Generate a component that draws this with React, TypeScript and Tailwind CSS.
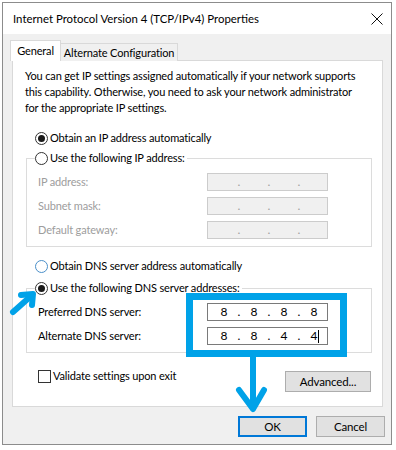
import React from 'react';

const Radio = ({ checked, blue }: { checked?: boolean; blue?: boolean }) => (
    <span className={`flex items-center justify-center w-[13px] h-[13px] rounded-full border bg-white shrink-0 ${blue ? 'border-[#4a8fc9]' : 'border-[#333333]'}`}>
        {checked && <span className="w-[7px] h-[7px] rounded-full bg-[#1a1a1a]" />}
    </span>
);

const IpBox = ({ parts, disabled, cursor }: { parts: string[]; disabled?: boolean; cursor?: boolean }) => (
    <div className={`flex items-center w-[121px] h-[18px] pl-[4px] border text-[12px] tracking-normal ${disabled ? 'bg-[#f0f0f0] border-[#cccccc] text-[#a0a0a0]' : 'bg-white border-[#7a7a7a] text-black'}`}>
        {parts.map((p, i) => (
            <React.Fragment key={i}>
                {i > 0 && <span className="w-[6px] text-center">.</span>}
                <span className="w-[24px] text-center relative">
                    {p}
                    {cursor && i === 3 && <span className="absolute top-[2px] right-[7px] w-px h-[13px] bg-black" />}
                </span>
            </React.Fragment>
        ))}
    </div>
);

const Row = ({ label, children, disabled, first }: { label: string; children: React.ReactNode; disabled?: boolean; first?: boolean }) => (
    <div className={`flex items-center h-[18px] pl-[11px] ${first ? 'mt-[7px]' : 'mt-[6px]'}`}>
        <span className={`w-[169px] ${disabled ? 'text-[#9d9d9d]' : 'text-black'}`}>{label}</span>
        {children}
    </div>
);

const Button = ({ children, focus, w }: { children: React.ReactNode; focus?: boolean; w: string }) => (
    <button className={`h-[21px] ${w} bg-[#e1e1e1] border ${focus ? 'border-[#0078d7] outline outline-1 outline-[#0078d7] -outline-offset-2' : 'border-[#adadad]'} text-black text-[11.5px] leading-[16px]`}>
        {children}
    </button>
);

export default function App() {
    return (
        <div className="relative w-[396px] h-[450px] bg-white pt-[2px] pl-[2px] text-[11px] tracking-[-0.15px] leading-[16px] text-black whitespace-nowrap" style={{ fontFamily: 'Lato, "Liberation Sans", sans-serif' }}>
            <div className="w-[390px] h-[443px] border border-[#8c8c8c] bg-[#f0f0f0] flex flex-col">
                {/* title bar */}
                <div className="h-[31px] bg-white flex items-center justify-between pl-[10px] pr-[6px] shrink-0">
                    <span className="text-[11.4px] tracking-normal">Internet Protocol Version 4 (TCP/IPv4) Properties</span>
                    <svg width="12" height="12" viewBox="0 0 12 12" className="mr-[2px]">
                        <path d="M0.5 0.5L11.5 11.5M11.5 0.5L0.5 11.5" stroke="#111" strokeWidth="1" fill="none" />
                    </svg>
                </div>

                {/* tabs */}
                <div className="flex items-end mt-[6px] pl-[7px] relative z-10 -mb-px">
                    <div className="h-[21px] w-[51px] bg-white border border-b-0 border-[#d9d9d9] flex items-center justify-center">General</div>
                    <div className="h-[18px] w-[117px] bg-[#f0f0f0] border border-l-0 border-b-0 border-[#d9d9d9] flex items-center justify-center">Alternate Configuration</div>
                </div>

                {/* panel */}
                <div className="ml-[9px] w-[371px] h-[347px] border border-[#d9d9d9] bg-white flex flex-col">
                    <p className="pt-[7px] pl-[12px]">
                        You can get IP settings assigned automatically if your network supports<br />
                        this capability. Otherwise, you need to ask your network administrator<br />
                        for the appropriate IP settings.
                    </p>

                    <label className="flex items-center gap-[2px] h-[16px] mt-[14px] ml-[22px]">
                        <Radio checked />
                        <span>Obtain an IP address automatically</span>
                    </label>

                    <fieldset className="mt-[4px] ml-[13px] w-[346px] border border-[#dcdcdc] pb-[7px]">
                        <legend className="flex items-center gap-[2px] ml-[8px] pr-[2px] h-[16px]">
                            <Radio />
                            <span>Use the following IP address:</span>
                        </legend>
                        <Row label="IP address:" disabled first><IpBox parts={['', '', '', '']} disabled /></Row>
                        <Row label="Subnet mask:" disabled><IpBox parts={['', '', '', '']} disabled /></Row>
                        <Row label="Default gateway:" disabled><IpBox parts={['', '', '', '']} disabled /></Row>
                    </fieldset>

                    <label className="flex items-center gap-[2px] h-[16px] mt-[11px] ml-[22px]">
                        <Radio blue />
                        <span>Obtain DNS server address automatically</span>
                    </label>

                    <fieldset className="mt-[6px] ml-[13px] w-[346px] border border-[#dcdcdc] pb-[7px]">
                        <legend className="flex items-center gap-[2px] ml-[8px] pr-[2px] h-[16px]">
                            <Radio checked />
                            <span>Use the following DNS server addresses:</span>
                        </legend>
                        <Row label="Preferred DNS server:" first><IpBox parts={['8', '8', '8', '8']} /></Row>
                        <Row label="Alternate DNS server:"><IpBox parts={['8', '8', '4', '4']} cursor /></Row>
                    </fieldset>

                    <div className="flex justify-between items-start mt-[15px]">
                        <label className="flex items-center gap-[2px] h-[16px] ml-[25px]">
                            <span className="w-[13px] h-[13px] border border-[#333333] bg-white" />
                            <span>Validate settings upon exit</span>
                        </label>
                        <div className="mt-[3px] mr-[11px]">
                            <Button w="w-[86px]">Advanced...</Button>
                        </div>
                    </div>
                </div>

                {/* dialog buttons */}
                <div className="flex justify-end gap-[9px] mt-[9px] pr-[6px]">
                    <Button focus w="w-[69px]">OK</Button>
                    <Button w="w-[69px]">Cancel</Button>
                </div>
            </div>

            {/* annotation: highlight box and arrows */}
            <div className="absolute left-[186px] top-[293px] w-[161px] h-[64px] border-[7px] border-[#00a2e8]" />
            <svg className="absolute left-0 top-0 pointer-events-none" width="396" height="450" viewBox="0 0 396 450">
                <g stroke="#00a2e8" strokeWidth="6" strokeLinecap="round" strokeLinejoin="round" fill="none">
                    <path d="M13 312L31 296" />
                    <path d="M21 295L33 294L32 305" />
                    <path d="M253 357V408" />
                    <path d="M239 390L253 409L264 390" />
                </g>
            </svg>
        </div>
    );
}
